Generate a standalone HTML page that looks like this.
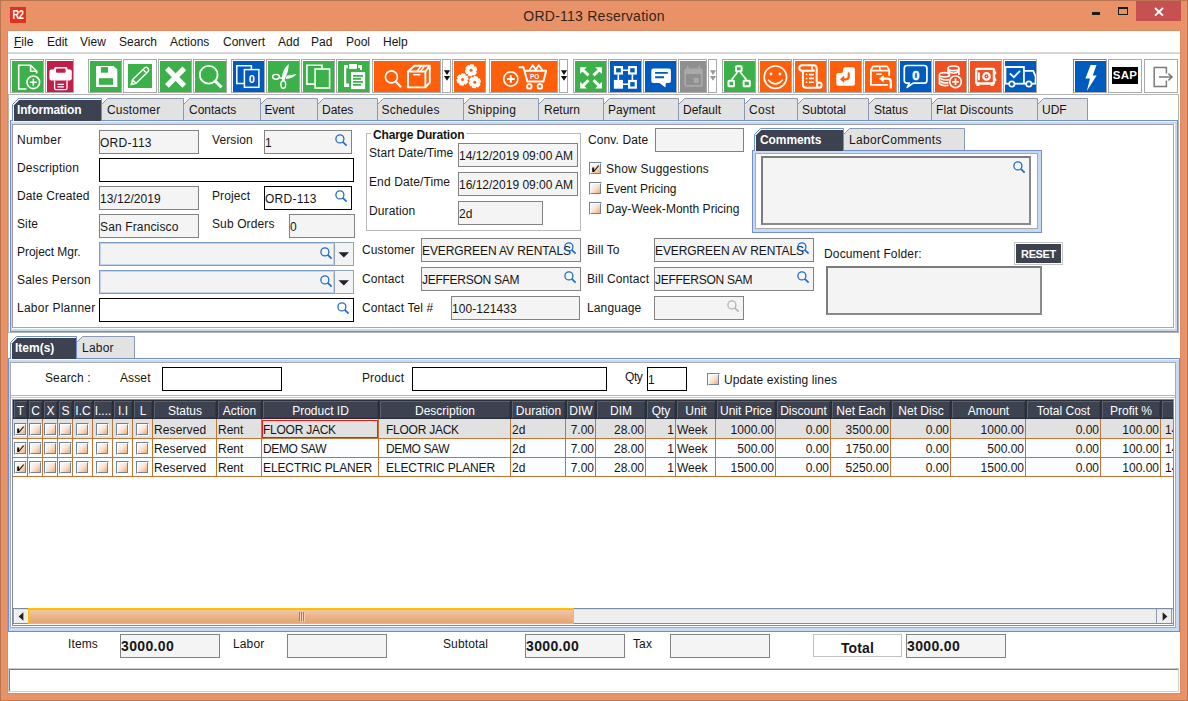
<!DOCTYPE html>
<html lang="en"><head><meta charset="utf-8"><title>ORD-113 Reservation</title>
<style>
*{box-sizing:border-box}
html,body{margin:0;padding:0}
body{width:1188px;height:701px;overflow:hidden;position:relative;background:#e99167;font-family:"Liberation Sans",sans-serif;font-size:12px;color:#161616;line-height:14px}
#win{position:absolute;left:0;top:0;width:1188px;height:701px;border:1px solid #b9754f;border-bottom-color:#c27a52}
#content{position:absolute;left:8px;top:31px;width:1172px;height:662px;background:#fff;box-shadow:0 0 0 1px #dd8b63}
.a{position:absolute}
.t{position:absolute;white-space:nowrap;line-height:14px;height:14px}
.b{font-weight:bold}
.w{color:#fff}
.f{position:absolute;background:#f4f4f4;border:1px solid #828282;height:24px;white-space:nowrap;overflow:hidden;line-height:14px;padding:5px 0 0 0}
.fb{position:absolute;background:#fff;border:1px solid #000;height:24px;white-space:nowrap;overflow:hidden;line-height:14px;padding:5px 0 0 0}
.btn{position:absolute;top:59px;height:34px;border:1px solid #aaa;background:#fff;padding:1px 0 0 1px}
.btn svg{display:block}
.dd{position:absolute;top:59px;height:34px;width:9px;border:1px solid #aaa;background:#fff}
.tab{position:absolute;top:98px;height:23px}
.tab span{position:absolute;top:5px;left:6px;white-space:nowrap}
.cb{position:absolute;width:13px;height:13px;border-top:1px solid #6f8297;border-left:1px solid #6f8297;border-right:1px solid #fff;border-bottom:1px solid #fff}
.cb i{display:block;width:11px;height:11px;border-top:1px solid #fff;border-left:1px solid #fff;border-right:1px solid #6f8297;border-bottom:1px solid #6f8297;background:linear-gradient(135deg,#f6f6f6 15%,#f9e3d3 50%,#f7aa69 100%)}
.cb svg{position:absolute;left:0;top:0}
.th{position:absolute;top:0;height:19px;background:#3d4250;border:1px solid #2b2f3a;box-shadow:inset 1px 1px 0 #5b6070,inset -1px -1px 0 #333743;color:#fff;text-align:center;line-height:14px;padding-top:3px;white-space:nowrap;overflow:hidden}
.td{position:absolute;height:19px;border-right:1px solid #c27636;border-bottom:1px solid #c27636;line-height:14px;padding:3px 1px 0 1px;white-space:nowrap;overflow:hidden}
.r{text-align:right}
</style></head>
<body>
<div id="win"></div>
<div id="content"></div>
<div class="a" style="left:10px;top:7px;width:16px;height:16px;background:#e0301e"></div><div class="t b w" style="left:10px;top:8px;width:16px;text-align:center;font-size:12px;letter-spacing:-.6px;transform:scaleX(.78);transform-origin:8px 0">R2</div>
<div class="t" id="title" style="left:394px;width:400px;text-align:center;top:7px;font-size:14px;letter-spacing:.25px;line-height:18px;height:18px;color:#33261f">ORD-113 Reservation</div>
<div class="a" style="left:1092px;top:12px;width:8px;height:3px;background:#1c1c1c"></div><div class="a" style="left:1118px;top:7px;width:10px;height:8px;border:1px solid #1c1c1c;border-top-width:2px"></div><div class="a" style="left:1136px;top:1px;width:45px;height:20px;background:#c75050"></div><svg class="a" style="left:1154px;top:7px" width="10" height="9" viewBox="0 0 10 9"><path d="M1 1L9 8.6M9 1L1 8.6" stroke="#fff" stroke-width="1.9" fill="none"/></svg>
<div class="t" style="left:14px;top:35px"><span style="text-decoration:underline">F</span>ile</div><div class="t" style="left:47px;top:35px">Edit</div><div class="t" style="left:80px;top:35px">View</div><div class="t" style="left:119px;top:35px">Search</div><div class="t" style="left:170px;top:35px">Actions</div><div class="t" style="left:223px;top:35px">Convert</div><div class="t" style="left:278px;top:35px">Add</div><div class="t" style="left:311px;top:35px">Pad</div><div class="t" style="left:346px;top:35px">Pool</div><div class="t" style="left:383px;top:35px">Help</div>
<div class="a" style="left:8px;top:52px;width:1172px;height:2px;background:#dcdcdc;border-bottom:1px solid #cfcfcf"></div>
<div class="btn" style="left:10px;width:34px"><svg width="31" height="31" viewBox="0 0 31 31"><rect width="31" height="31" fill="#3cb14a"/><path d="M14.5 28H6.7V4.2H18.6L24.7 10.3V12.6" stroke="#fff" fill="none" stroke-width="1.6"/><path d="M18.6 4.2V10.3H24.7" stroke="#fff" fill="none" stroke-width="1.6"/><circle cx="21.3" cy="21.3" r="6.3" stroke="#fff" fill="none" stroke-width="1.6"/><path d="M21.3 17.8V24.8M17.8 21.3H24.8" stroke="#fff" fill="none" stroke-width="1.6"/></svg></div>
<div class="btn" style="left:45px;width:29px"><svg width="26" height="31" viewBox="0 0 26 31"><rect width="26" height="31" fill="#c21e4a"/><path d="M8 6.1H19.6L21 8.6H23Q24.8 8.6 24.8 10.4V17.6Q24.8 19.4 23 19.4H4.2Q2.4 19.4 2.4 17.6V10.4Q2.4 8.6 4.2 8.6H6.6Z" fill="#fff"/><rect x="9" y="7.6" width="9.6" height="4.1" rx="1.2" fill="#c21e4a"/><path d="M7.6 19.4V27.2Q7.6 28.6 9 28.6H18.6Q20 28.6 20 27.2V19.4" stroke="#fff" fill="none" stroke-width="1.3"/><path d="M10.5 23.3H17M10.5 25.9H17" stroke="#fff" fill="none" stroke-width="1.2"/></svg></div>
<div class="btn" style="left:88px;width:34px"><svg width="31" height="31" viewBox="0 0 31 31"><rect width="31" height="31" fill="#3cb14a"/><path d="M6.1 4.9H23.6L27.3 8.6V26H6.1Z" fill="#fff"/><rect x="10.9" y="6.1" width="7.1" height="5.6" fill="#3cb14a"/><rect x="8.9" y="17.2" width="14.1" height="6.6" fill="#3cb14a"/></svg></div>
<div class="btn" style="left:158px;width:34px"><svg width="31" height="31" viewBox="0 0 31 31"><rect width="31" height="31" fill="#3cb14a"/><path d="M6.9 7.4L24.3 24.8M24.3 7.4L6.9 24.8" stroke="#fff" stroke-width="5.3" fill="none"/></svg></div>
<div class="btn" style="left:193px;width:34px"><svg width="31" height="31" viewBox="0 0 31 31"><rect width="31" height="31" fill="#3cb14a"/><circle cx="13.7" cy="13.7" r="8.9" stroke="#fff" fill="none" stroke-width="1.8"/><path d="M20 20L26.6 26.4" stroke="#fff" fill="none" stroke-width="3"/></svg></div>
<div class="btn" style="left:231px;width:34px"><svg width="31" height="31" viewBox="0 0 31 31"><rect width="31" height="31" fill="#005bbf"/><path d="M11.4 22.5H3.8V4.8H18.4V8.6" stroke="#fff" fill="none" stroke-width="1.5"/><rect x="11.4" y="8.6" width="14.5" height="17.7" stroke="#fff" fill="none" stroke-width="1.5"/><text x="18.7" y="21.6" font-family="Liberation Sans,sans-serif" font-weight="bold" font-size="11" fill="#fff" text-anchor="middle">0</text></svg></div>
<div class="btn" style="left:266px;width:34px"><svg width="31" height="31" viewBox="0 0 31 31"><rect width="31" height="31" fill="#3cb14a"/><ellipse cx="8" cy="15.8" rx="3.4" ry="2.4" stroke="#fff" fill="none" stroke-width="1.4"/><ellipse cx="15.3" cy="23.5" rx="2.4" ry="3.8" stroke="#fff" fill="none" stroke-width="1.4"/><path d="M13.8 17.6Q14.4 8 20.7 3Q20.8 10 17.4 16.4L16.4 19.8H14.2Z" fill="#fff"/><path d="M18.6 14.8L28.6 12.9Q25.2 17.2 17.8 17.9Z" fill="#fff"/><path d="M11.2 16.4L15.6 18.2" stroke="#fff" fill="none" stroke-width="1.4"/></svg></div>
<div class="btn" style="left:301px;width:34px"><svg width="31" height="31" viewBox="0 0 31 31"><rect width="31" height="31" fill="#3cb14a"/><path d="M12.1 23.1H3.9V4.2H19V8" stroke="#fff" fill="none" stroke-width="1.6"/><rect x="12.1" y="8" width="14.5" height="19" stroke="#fff" fill="none" stroke-width="1.6"/></svg></div>
<div class="btn" style="left:336px;width:34px"><svg width="31" height="31" viewBox="0 0 31 31"><rect width="31" height="31" fill="#3cb14a"/><path d="M6 4H10V7.2H8.2V22.6H11.1V26H6Z" fill="#fff"/><rect x="11.1" y="3" width="7.8" height="4.9" fill="#fff"/><path d="M20.2 4H24V8.9H22V7H20.2Z" fill="#fff"/><rect x="13" y="11.1" width="14.1" height="17" fill="#fff"/><path d="M15 14.9H25M15 17.9H23M15 20.9H25M15 23.9H23" stroke="#3cb14a" stroke-width="1.7"/></svg></div>
<div class="btn" style="left:372px;width:69px"><svg width="66" height="31" viewBox="0 0 66 31"><rect width="66" height="31" fill="#ff5f0a"/><circle cx="17.4" cy="15.9" r="6" stroke="#fff" fill="none" stroke-width="1.6"/><path d="M21.7 20.4L27.1 26.2" stroke="#fff" fill="none" stroke-width="2.2"/><path d="M34 10.5H51.4V26.4H34ZM34 10.5L40.4 4.8H55.8L51.4 10.5M55.8 4.8V21.5L51.4 26.4" stroke="#fff" fill="none" stroke-width="1.9" stroke-linejoin="round"/><path d="M47.4 4.8L43 10.5M50.6 4.8L46.4 10.5" stroke="#fff" fill="none" stroke-width="1.5"/><path d="M39.2 13.7H46.2" stroke="#fff" fill="none" stroke-width="1.5"/></svg></div>
<div class="btn" style="left:452px;width:34px"><svg width="31" height="31" viewBox="0 0 31 31"><rect width="31" height="31" fill="#ff5f0a"/><circle cx="17.10" cy="9.30" r="4.80" fill="#fff"/><rect x="14.80" y="3.30" width="4.6" height="12.00" rx="1" fill="#fff" transform="rotate(10 17.10 9.30)"/><rect x="14.80" y="3.30" width="4.6" height="12.00" rx="1" fill="#fff" transform="rotate(70 17.10 9.30)"/><rect x="14.80" y="3.30" width="4.6" height="12.00" rx="1" fill="#fff" transform="rotate(130 17.10 9.30)"/><circle cx="17.10" cy="9.30" r="1.5" fill="#ff5f0a"/><circle cx="8.50" cy="18.50" r="4.80" fill="#fff"/><rect x="6.20" y="12.50" width="4.6" height="12.00" rx="1" fill="#fff" transform="rotate(10 8.50 18.50)"/><rect x="6.20" y="12.50" width="4.6" height="12.00" rx="1" fill="#fff" transform="rotate(70 8.50 18.50)"/><rect x="6.20" y="12.50" width="4.6" height="12.00" rx="1" fill="#fff" transform="rotate(130 8.50 18.50)"/><circle cx="8.50" cy="18.50" r="1.5" fill="#ff5f0a"/><circle cx="20.80" cy="21.20" r="4.80" fill="#fff"/><rect x="18.50" y="15.20" width="4.6" height="12.00" rx="1" fill="#fff" transform="rotate(10 20.80 21.20)"/><rect x="18.50" y="15.20" width="4.6" height="12.00" rx="1" fill="#fff" transform="rotate(70 20.80 21.20)"/><rect x="18.50" y="15.20" width="4.6" height="12.00" rx="1" fill="#fff" transform="rotate(130 20.80 21.20)"/><circle cx="20.80" cy="21.20" r="1.5" fill="#ff5f0a"/></svg></div>
<div class="btn" style="left:489px;width:69px"><svg width="66" height="31" viewBox="0 0 66 31"><rect width="66" height="31" fill="#ff5f0a"/><circle cx="19.8" cy="18" r="7.1" stroke="#fff" fill="none" stroke-width="1.7"/><path d="M19.8 14.2V21.8M16 18H23.6" stroke="#fff" fill="none" stroke-width="2"/><path d="M28.4 6.3H32.4L36.4 20.6H52.4L55.2 9.8H34" stroke="#fff" fill="none" stroke-width="2" stroke-linejoin="round" stroke-linecap="round"/><circle cx="38.3" cy="25.4" r="2.3" stroke="#fff" fill="none" stroke-width="1.8"/><circle cx="48.9" cy="25.4" r="2.3" stroke="#fff" fill="none" stroke-width="1.8"/><path d="M38.4 9L41.8 4.2L44.8 8.4L47.7 4.2L51.4 9" stroke="#fff" fill="none" stroke-width="1.8" stroke-linejoin="round"/><text x="43.6" y="18" font-family="Liberation Sans,sans-serif" font-weight="bold" font-size="6.4" fill="#fff" text-anchor="middle">PO</text></svg></div>
<div class="btn" style="left:573px;width:34px"><svg width="31" height="31" viewBox="0 0 31 31"><rect width="31" height="31" fill="#3cb14a"/><path d="M5.1 6.2L11.8 6.2L5.1 12.9Z" fill="#fff"/><path d="M7.1 8.2L13.5 14.4" stroke="#fff" stroke-width="2.9"/><path d="M26.9 6.2L20.2 6.2L26.9 12.9Z" fill="#fff"/><path d="M24.9 8.2L18.5 14.4" stroke="#fff" stroke-width="2.9"/><path d="M5.1 27.4L11.8 27.4L5.1 20.7Z" fill="#fff"/><path d="M7.1 25.4L13.5 19.2" stroke="#fff" stroke-width="2.9"/><path d="M26.9 27.4L20.2 27.4L26.9 20.7Z" fill="#fff"/><path d="M24.9 25.4L18.5 19.2" stroke="#fff" stroke-width="2.9"/></svg></div>
<div class="btn" style="left:608px;width:34px"><svg width="31" height="31" viewBox="0 0 31 31"><rect width="31" height="31" fill="#005bbf"/><rect x="5" y="6.1" width="6.9" height="6.4" stroke="#fff" fill="none" stroke-width="2.2"/><rect x="19.1" y="6.1" width="6.7" height="6.4" stroke="#fff" fill="none" stroke-width="2.2"/><rect x="3.9" y="18.9" width="9.1" height="8.8" fill="#fff"/><rect x="19.1" y="20" width="6.7" height="6.6" stroke="#fff" fill="none" stroke-width="2.2"/><path d="M13 9.2H18M8.3 13.6V18.9M22.4 13.6V18.9M13 23.3H18" stroke="#fff" fill="none" stroke-width="1.6"/></svg></div>
<div class="btn" style="left:643px;width:34px"><svg width="31" height="31" viewBox="0 0 31 31"><rect width="31" height="31" fill="#005bbf"/><path d="M8.3 7.4H23.9Q25.9 7.4 25.9 9.4V19.9Q25.9 21.9 23.9 21.9H20.9L20.4 26.4L14.5 21.9H8.3Q6.3 21.9 6.3 19.9V9.4Q6.3 7.4 8.3 7.4Z" fill="#fff"/><path d="M10.1 11.9H22.8M10.1 16.3H19" stroke="#005bbf" stroke-width="1.9"/></svg></div>
<div class="btn" style="left:678px;width:29px"><svg width="26" height="31" viewBox="0 0 26 31"><rect width="26" height="31" fill="#8f8f8f"/><rect x="4.3" y="7.4" width="18.3" height="18.3" rx="1.6" fill="#a9a9a9"/><rect x="7" y="5" width="1.6" height="3" fill="#a9a9a9"/><rect x="18.4" y="5" width="1.6" height="3" fill="#a9a9a9"/><rect x="6" y="13" width="14.9" height="11" fill="#8f8f8f"/><rect x="13.7" y="16.8" width="5" height="5" fill="#a9a9a9"/></svg></div>
<div class="btn" style="left:722px;width:34px"><svg width="31" height="31" viewBox="0 0 31 31"><rect width="31" height="31" fill="#3cb14a"/><rect x="12" y="5.2" width="5.6" height="5" rx=".6" stroke="#fff" fill="none" stroke-width="2"/><rect x="4.5" y="19.7" width="5.5" height="5.6" rx=".6" stroke="#fff" fill="none" stroke-width="2"/><rect x="19.6" y="19.7" width="6.2" height="5.6" rx=".6" stroke="#fff" fill="none" stroke-width="2"/><path d="M13.4 11.2L7.6 18.7M16.4 11.2L22.4 18.7" stroke="#fff" fill="none" stroke-width="1.7"/></svg></div>
<div class="btn" style="left:758px;width:34px"><svg width="31" height="31" viewBox="0 0 31 31"><rect width="31" height="31" fill="#ff5f0a"/><circle cx="15.4" cy="16.2" r="11.2" stroke="#fff" fill="none" stroke-width="1.6"/><circle cx="11" cy="13" r="1.4" fill="#fff"/><circle cx="19.9" cy="13" r="1.4" fill="#fff"/><path d="M8.6 19.2Q15.4 26.6 22.2 19.2" stroke="#fff" fill="none" stroke-width="1.6" stroke-linecap="round"/></svg></div>
<div class="btn" style="left:793px;width:34px"><svg width="31" height="31" viewBox="0 0 31 31"><rect width="31" height="31" fill="#ff5f0a"/><path d="M19.6 9.7H7.4Q4.3 9.7 4.3 7Q4.3 4.3 7.4 4.3H18.6Q21.7 4.3 21.7 7.6V21.4" stroke="#fff" fill="none" stroke-width="2"/><path d="M18.6 4.3Q16.6 5 16.8 7Q17 9.2 19.4 9.7" stroke="#fff" fill="none" stroke-width="1.6"/><path d="M7.9 9.7V23.4Q7.9 26.7 11.2 26.7H24.4Q26.7 26.7 26.7 24Q26.7 21.4 24.2 21.4Q21.9 21.5 21.9 24Q22 26.4 24.4 26.7" stroke="#fff" fill="none" stroke-width="2" stroke-linejoin="round"/><path d="M13.9 13.6H18.9M13.9 17.4H18.9M13.9 21.2H18.9" stroke="#fff" fill="none" stroke-width="1.6"/><path d="M10.8 13.6H12.3M10.8 17.4H12.3M10.8 21.2H12.3" stroke="#fff" fill="none" stroke-width="1.5"/></svg></div>
<div class="btn" style="left:828px;width:34px"><svg width="31" height="31" viewBox="0 0 31 31"><rect width="31" height="31" fill="#ff5f0a"/><path d="M15.1 6.2H22.9Q24.9 6.2 24.9 8.2V22.8Q24.9 24.8 22.9 24.8H8.3Q6.3 24.8 6.3 22.8V14.1Q6.3 12.1 8.3 12.1H10.6Q13.1 12.1 13.1 9.6V8.2Q13.1 6.2 15.1 6.2Z" fill="#fff"/><path d="M18.7 12.4V15.6Q18.7 18.3 16 18.3H12.4" stroke="#ff5f0a" stroke-width="2.2" fill="none" stroke-linecap="round"/><path d="M10 18.3L14.2 14.6V22Z" fill="#ff5f0a"/></svg></div>
<div class="btn" style="left:863px;width:34px"><svg width="31" height="31" viewBox="0 0 31 31"><rect width="31" height="31" fill="#ff5f0a"/><path d="M23 23.9H5.9V8.9L8 5.4H22.1L24.2 8.9V15" stroke="#fff" fill="none" stroke-width="1.8" stroke-linejoin="round"/><path d="M5.9 9.6H24.2M14.8 5.4V9.6" stroke="#fff" fill="none" stroke-width="1.6"/><path d="M11.2 13.2H16.8" stroke="#fff" fill="none" stroke-width="1.5"/><path d="M17.6 17.7H22.6Q25.8 17.7 25.8 20.9V27.4" stroke="#fff" fill="none" stroke-width="2.3"/><path d="M14 17.7L18.6 14.2V21.2Z" fill="#fff"/></svg></div>
<div class="btn" style="left:898px;width:34px"><svg width="31" height="31" viewBox="0 0 31 31"><rect width="31" height="31" fill="#005bbf"/><path d="M7 4.5H24.2Q26.9 4.5 26.9 7.2V19.4Q26.9 22.1 24.2 22.1H13.2L7.2 26.4L9.4 22.1H7Q4.3 22.1 4.3 19.4V7.2Q4.3 4.5 7 4.5Z" stroke="#fff" fill="none" stroke-width="1.7" stroke-linejoin="round"/><text x="15.9" y="18.5" font-family="Liberation Sans,sans-serif" font-weight="bold" font-size="13" fill="#fff" stroke="#fff" stroke-width=".5" text-anchor="middle">0</text></svg></div>
<div class="btn" style="left:933px;width:34px"><svg width="31" height="31" viewBox="0 0 31 31"><rect width="31" height="31" fill="#f05122"/><ellipse cx="18.5" cy="7.3" rx="5.4" ry="2.3" stroke="#fff" fill="none" stroke-width="1.6"/><path d="M13.1 7.3V12.8M23.9 7.3V14M13.1 10.2Q18.5 14.2 23.9 10.2" stroke="#fff" fill="none" stroke-width="1.6"/><ellipse cx="9.4" cy="13.8" rx="5" ry="2.2" stroke="#fff" fill="none" stroke-width="1.6"/><path d="M4.4 13.8V22.6Q7.6 25.6 13.6 24.2M4.4 16.6Q8.4 20 14 18.6M4.4 19.6Q7.8 22.8 13.4 21.6M14.4 13.8V15.6" stroke="#fff" fill="none" stroke-width="1.6"/><circle cx="20.5" cy="20.8" r="5.8" fill="#f05122" stroke="#fff" stroke-width="1.7"/><path d="M20.5 17.5V24.1M17.2 20.8H23.8" stroke="#fff" fill="none" stroke-width="1.8"/></svg></div>
<div class="btn" style="left:968px;width:34px"><svg width="31" height="31" viewBox="0 0 31 31"><rect width="31" height="31" fill="#f05122"/><rect x="6.2" y="7.9" width="17.8" height="14.6" rx="1" stroke="#fff" fill="none" stroke-width="2.4"/><path d="M6.4 23.4H9.6V25H6.4ZM20.6 23.4H23.8V25H20.6ZM25 10.6H26.2V13.2H25ZM25 17.4H26.2V20H25Z" fill="#fff"/><path d="M8.9 11.5V19.2" stroke="#fff" fill="none" stroke-width="2"/><circle cx="16.5" cy="15.4" r="3.2" stroke="#fff" fill="none" stroke-width="2.2"/><circle cx="16.5" cy="15.4" r=".7" fill="#fff"/></svg></div>
<div class="btn" style="left:1003px;width:34px"><svg width="31" height="31" viewBox="0 0 31 31"><rect width="31" height="31" fill="#005bbf"/><path d="M0 22.7H31" stroke="#fff" fill="none" stroke-width="1.8"/><path d="M.4 22V6H18.9V22M18.9 9.8H28.2L30.6 15.4V22" stroke="#fff" fill="none" stroke-width="1.8" stroke-linejoin="miter"/><path d="M4.8 12.4L8.9 16.2L15 9.8" stroke="#fff" fill="none" stroke-width="1.8"/><circle cx="6.8" cy="23" r="2.7" fill="#005bbf" stroke="#fff" stroke-width="1.7"/><circle cx="23.9" cy="23" r="2.7" fill="#005bbf" stroke="#fff" stroke-width="1.7"/></svg></div>
<div class="btn" style="left:1073px;width:34px;border-top-color:#828282;border-left-color:#828282"><svg width="31" height="31" viewBox="0 0 31 31"><rect width="31" height="31" fill="#005bbf"/><path d="M15.6 3.9H21.5L17.8 14.4H21.7L11.8 30L15 17.4H10.4Z" fill="#fff"/></svg></div>
<div class="btn" style="left:123px;width:34px;padding:4px 0 0 4px"><svg width="24" height="24" viewBox="0 0 24 24"><rect width="24" height="24" fill="#3cb14a"/><path d="M3.1 20.7L4.4 15.7L16.6 3.9A2.5 2.5 0 0 1 20.1 7.4L8.1 19.3ZM4.4 15.7L8.1 19.3M15 5.5L18.5 9" stroke="#fff" stroke-width="1.4" fill="none" stroke-linejoin="round"/><path d="M3.1 20.7L3.9 17.8L6 19.9Z" fill="#fff"/></svg></div>
<div class="btn" style="left:1108px;width:34px"></div><div class="a" style="left:1112px;top:67px;width:26px;height:17px;background:#000"></div><div class="t b w" style="left:1112px;top:68px;width:26px;text-align:center;font-size:11.5px;letter-spacing:.3px">SAP</div>
<div class="btn" style="left:1144px;width:34px"><svg width="31" height="31" viewBox="0 0 31 31"><path d="M20.4 12.4V6.4H8.2V25.4H20.4V19.6" stroke="#7a7a7a" stroke-width="1.5" fill="none"/><path d="M13 16H26M22.4 12.6L26 16L22.4 19.4" stroke="#7a7a7a" stroke-width="1.5" fill="none"/></svg></div>
<div class="dd" style="left:442px"><svg width="7" height="32" viewBox="0 0 7 32" style="display:block;overflow:visible"><path d="M.9 10.3H7.1L4 15ZM.9 16.1H7.1L4 20.8Z" fill="#111"/></svg></div><div class="dd" style="left:559px"><svg width="7" height="32" viewBox="0 0 7 32" style="display:block;overflow:visible"><path d="M.9 10.3H7.1L4 15ZM.9 16.1H7.1L4 20.8Z" fill="#111"/></svg></div><div class="dd" style="left:708px"><svg width="7" height="32" viewBox="0 0 7 32" style="display:block;overflow:visible"><path d="M.9 10.3H7.1L4 15ZM.9 16.1H7.1L4 20.8Z" fill="#999"/></svg></div>
<div class="a" style="left:8px;top:94px;width:1171px;height:239px;border:1px solid #b5b5b5"></div>
<svg class="a" style="left:101px;top:98px" width="83" height="22" viewBox="0 0 83 22"><path d="M.5 22.5V6.5L6.5 .5H82.5V22.5" fill="#e2e2e2" stroke="#8a99b3"/></svg><div class="t" style="left:107.0px;top:103px;letter-spacing:0.17px">Customer</div><svg class="a" style="left:183px;top:98px" width="78" height="22" viewBox="0 0 78 22"><path d="M.5 22.5V6.5L6.5 .5H77.5V22.5" fill="#e2e2e2" stroke="#8a99b3"/></svg><div class="t" style="left:189.0px;top:103px">Contacts</div><svg class="a" style="left:260px;top:98px" width="58" height="22" viewBox="0 0 58 22"><path d="M.5 22.5V6.5L6.5 .5H57.5V22.5" fill="#e2e2e2" stroke="#8a99b3"/></svg><div class="t" style="left:264.5px;top:103px;letter-spacing:-0.16px">Event</div><svg class="a" style="left:317px;top:98px" width="61" height="22" viewBox="0 0 61 22"><path d="M.5 22.5V6.5L6.5 .5H60.5V22.5" fill="#e2e2e2" stroke="#8a99b3"/></svg><div class="t" style="left:322.0px;top:103px">Dates</div><svg class="a" style="left:377px;top:98px" width="87" height="22" viewBox="0 0 87 22"><path d="M.5 22.5V6.5L6.5 .5H86.5V22.5" fill="#e2e2e2" stroke="#8a99b3"/></svg><div class="t" style="left:381.5px;top:103px;letter-spacing:0.23px">Schedules</div><svg class="a" style="left:463px;top:98px" width="76" height="22" viewBox="0 0 76 22"><path d="M.5 22.5V6.5L6.5 .5H75.5V22.5" fill="#e2e2e2" stroke="#8a99b3"/></svg><div class="t" style="left:467.5px;top:103px;letter-spacing:0.25px">Shipping</div><svg class="a" style="left:538px;top:98px" width="66" height="22" viewBox="0 0 66 22"><path d="M.5 22.5V6.5L6.5 .5H65.5V22.5" fill="#e2e2e2" stroke="#8a99b3"/></svg><div class="t" style="left:544.0px;top:103px">Return</div><svg class="a" style="left:603px;top:98px" width="76" height="22" viewBox="0 0 76 22"><path d="M.5 22.5V6.5L6.5 .5H75.5V22.5" fill="#e2e2e2" stroke="#8a99b3"/></svg><div class="t" style="left:608.0px;top:103px">Payment</div><svg class="a" style="left:678px;top:98px" width="67" height="22" viewBox="0 0 67 22"><path d="M.5 22.5V6.5L6.5 .5H66.5V22.5" fill="#e2e2e2" stroke="#8a99b3"/></svg><div class="t" style="left:683.0px;top:103px">Default</div><svg class="a" style="left:744px;top:98px" width="54" height="22" viewBox="0 0 54 22"><path d="M.5 22.5V6.5L6.5 .5H53.5V22.5" fill="#e2e2e2" stroke="#8a99b3"/></svg><div class="t" style="left:749.0px;top:103px;letter-spacing:0.28px">Cost</div><svg class="a" style="left:797px;top:98px" width="72" height="22" viewBox="0 0 72 22"><path d="M.5 22.5V6.5L6.5 .5H71.5V22.5" fill="#e2e2e2" stroke="#8a99b3"/></svg><div class="t" style="left:802.0px;top:103px">Subtotal</div><svg class="a" style="left:868px;top:98px" width="64" height="22" viewBox="0 0 64 22"><path d="M.5 22.5V6.5L6.5 .5H63.5V22.5" fill="#e2e2e2" stroke="#8a99b3"/></svg><div class="t" style="left:874.0px;top:103px">Status</div><svg class="a" style="left:931px;top:98px" width="107" height="22" viewBox="0 0 107 22"><path d="M.5 22.5V6.5L6.5 .5H106.5V22.5" fill="#e2e2e2" stroke="#8a99b3"/></svg><div class="t" style="left:936.0px;top:103px;letter-spacing:0.10px">Flat Discounts</div><svg class="a" style="left:1037px;top:98px" width="51" height="22" viewBox="0 0 51 22"><path d="M.5 22.5V6.5L6.5 .5H50.5V22.5" fill="#e2e2e2" stroke="#8a99b3"/></svg><div class="t" style="left:1042.0px;top:103px">UDF</div>
<div class="a" style="left:10px;top:120px;width:1168px;height:212px;background:#c6dbf3;border:1px solid #6f8fd0;border-right-color:#7b8ca3;border-bottom-color:#7b8ca3"></div><div class="a" style="left:12px;top:124px;width:1162px;height:204px;background:#fff;border:1px solid #a9a9a9;border-left-color:#9c9c9c;border-top-color:#9c9c9c"></div><div class="a" style="left:12px;top:328px;width:1163px;height:1px;background:#fff"></div><div class="a" style="left:1174px;top:124px;width:1px;height:205px;background:#fff"></div>
<div class="a" style="left:11px;top:121px;width:1166px;height:1px;background:#eef5fd"></div><svg class="a" style="left:12px;top:98px" width="90" height="23" viewBox="0 0 90 23"><path d="M.5 23.5V6.5L6.5 .5H89.5V23.5" fill="#fff" stroke="#6f8fd0"/><path d="M2 23V7.2L7.2 2H89V23Z" fill="#3d4250"/></svg><div class="t b w" style="left:17.0px;top:103px;letter-spacing:-0.15px">Information</div>
<div class="t" style="left:17px;top:133px;letter-spacing:0.30px;">Number</div><div class="f" style="left:99px;top:130px;width:100px;letter-spacing:0.29px;">ORD-113</div><div class="t" style="left:212px;top:133px;letter-spacing:.12px;">Version</div><div class="f" style="left:264px;top:130px;width:88px;">1</div><svg class="a" style="left:335px;top:134px" width="13" height="13" viewBox="0 0 13 13"><circle cx="4.9" cy="4.9" r="4" stroke="#1e6fc6" stroke-width="1.3" fill="none"/><path d="M7.8 7.8L11.6 11.6" stroke="#1e6fc6" stroke-width="1.7"/></svg><div class="t" style="left:17px;top:161px;letter-spacing:0.18px;">Description</div><div class="fb" style="left:99px;top:158px;width:255px;"></div><div class="t" style="left:17px;top:189px;letter-spacing:0.09px;">Date Created</div><div class="f" style="left:99px;top:186px;width:100px;letter-spacing:0.07px;">13/12/2019</div><div class="t" style="left:212px;top:189px;letter-spacing:.12px;">Project</div><div class="fb" style="left:264px;top:186px;width:88px;letter-spacing:0.29px;">ORD-113</div><svg class="a" style="left:335px;top:190px" width="13" height="13" viewBox="0 0 13 13"><circle cx="4.9" cy="4.9" r="4" stroke="#1e6fc6" stroke-width="1.3" fill="none"/><path d="M7.8 7.8L11.6 11.6" stroke="#1e6fc6" stroke-width="1.7"/></svg><div class="t" style="left:17px;top:217px;letter-spacing:.12px;">Site</div><div class="f" style="left:99px;top:214px;width:100px;letter-spacing:0.14px;">San Francisco</div><div class="t" style="left:212px;top:217px;letter-spacing:.12px;">Sub Orders</div><div class="f" style="left:289px;top:214px;width:66px;">0</div>
<div class="t" style="left:17px;top:245px;letter-spacing:-0.04px;">Project Mgr.</div><div class="t" style="left:17px;top:273px;letter-spacing:0.22px;">Sales Person</div><div class="t" style="left:17px;top:301px;letter-spacing:0.24px;">Labor Planner</div><div class="a" style="left:99px;top:242px;width:236px;height:24px;background:#f3f3f3;border:1px solid #7d9cc4;box-shadow:inset 0 0 0 1px #c3d3e8"></div><div class="a" style="left:334px;top:242px;width:20px;height:24px;background:#f3f3f3;border:1px solid #8fa3bd"></div><svg class="a" style="left:338px;top:252px" width="12" height="6" viewBox="0 0 12 6"><path d="M.5 .3H11L5.8 5.4Z" fill="#222"/></svg><svg class="a" style="left:320px;top:247px" width="13" height="13" viewBox="0 0 13 13"><circle cx="4.9" cy="4.9" r="4" stroke="#1e6fc6" stroke-width="1.3" fill="none"/><path d="M7.8 7.8L11.6 11.6" stroke="#1e6fc6" stroke-width="1.7"/></svg><div class="a" style="left:99px;top:270px;width:236px;height:24px;background:#f3f3f3;border:1px solid #7d9cc4;box-shadow:inset 0 0 0 1px #c3d3e8"></div><div class="a" style="left:334px;top:270px;width:20px;height:24px;background:#f3f3f3;border:1px solid #8fa3bd"></div><svg class="a" style="left:338px;top:280px" width="12" height="6" viewBox="0 0 12 6"><path d="M.5 .3H11L5.8 5.4Z" fill="#222"/></svg><svg class="a" style="left:320px;top:275px" width="13" height="13" viewBox="0 0 13 13"><circle cx="4.9" cy="4.9" r="4" stroke="#1e6fc6" stroke-width="1.3" fill="none"/><path d="M7.8 7.8L11.6 11.6" stroke="#1e6fc6" stroke-width="1.7"/></svg><div class="fb" style="left:99px;top:298px;width:255px;"></div><svg class="a" style="left:337px;top:302px" width="13" height="13" viewBox="0 0 13 13"><circle cx="4.9" cy="4.9" r="4" stroke="#1e6fc6" stroke-width="1.3" fill="none"/><path d="M7.8 7.8L11.6 11.6" stroke="#1e6fc6" stroke-width="1.7"/></svg>
<div class="a" style="left:366px;top:133px;width:215px;height:98px;border:1px solid #b9b9b9"></div><div class="t b" style="left:371px;top:128px;background:#fff;padding:0 2px;letter-spacing:-.18px">Charge Duration</div><div class="t" style="left:369px;top:146px;letter-spacing:0.04px;">Start Date/Time</div><div class="f" style="left:458px;top:143px;width:120px;">14/12/2019 09:00 AM</div><div class="t" style="left:369px;top:175px;letter-spacing:.12px;">End Date/Time</div><div class="f" style="left:458px;top:172px;width:120px;">16/12/2019 09:00 AM</div><div class="t" style="left:369px;top:204px;letter-spacing:.12px;">Duration</div><div class="f" style="left:458px;top:201px;width:85px;">2d</div>
<div class="t" style="left:362px;top:243px;letter-spacing:.12px;">Customer</div><div class="f" style="left:421px;top:238px;width:160px;letter-spacing:-0.10px;">EVERGREEN AV RENTALS</div><svg class="a" style="left:564px;top:242px" width="13" height="13" viewBox="0 0 13 13"><circle cx="4.9" cy="4.9" r="4" stroke="#1e6fc6" stroke-width="1.3" fill="none"/><path d="M7.8 7.8L11.6 11.6" stroke="#1e6fc6" stroke-width="1.7"/></svg><div class="t" style="left:362px;top:272px;letter-spacing:.12px;">Contact</div><div class="f" style="left:421px;top:267px;width:160px;letter-spacing:-0.26px;">JEFFERSON SAM</div><svg class="a" style="left:564px;top:271px" width="13" height="13" viewBox="0 0 13 13"><circle cx="4.9" cy="4.9" r="4" stroke="#1e6fc6" stroke-width="1.3" fill="none"/><path d="M7.8 7.8L11.6 11.6" stroke="#1e6fc6" stroke-width="1.7"/></svg><div class="t" style="left:362px;top:301px;letter-spacing:.12px;">Contact Tel #</div><div class="f" style="left:451px;top:296px;width:129px;letter-spacing:0.07px;">100-121433</div>
<div class="t" style="left:588px;top:133px;letter-spacing:.12px;">Conv. Date</div><div class="f" style="left:655px;top:128px;width:89px;"></div><div class="cb" style="left:589px;top:162px"><i></i><svg width="12" height="12" viewBox="0 0 12 12"><path d="M2.2 4.6H4.2V7.2L8.2 2.2L9 3L4 9H2.2Z" fill="#111"/></svg></div><div class="t" style="left:606px;top:162px;letter-spacing:0.23px;">Show Suggestions</div><div class="cb" style="left:589px;top:182px"><i></i></div><div class="t" style="left:606px;top:182px;letter-spacing:-0.02px;">Event Pricing</div><div class="cb" style="left:589px;top:202px"><i></i></div><div class="t" style="left:606px;top:202px;letter-spacing:0.01px;">Day-Week-Month Pricing</div>
<div class="t" style="left:587px;top:243px;letter-spacing:.12px;">Bill To</div><div class="f" style="left:654px;top:238px;width:160px;letter-spacing:-0.10px;">EVERGREEN AV RENTALS</div><svg class="a" style="left:797px;top:242px" width="13" height="13" viewBox="0 0 13 13"><circle cx="4.9" cy="4.9" r="4" stroke="#1e6fc6" stroke-width="1.3" fill="none"/><path d="M7.8 7.8L11.6 11.6" stroke="#1e6fc6" stroke-width="1.7"/></svg><div class="t" style="left:587px;top:272px;letter-spacing:.12px;">Bill Contact</div><div class="f" style="left:654px;top:267px;width:160px;letter-spacing:-0.26px;">JEFFERSON SAM</div><svg class="a" style="left:797px;top:271px" width="13" height="13" viewBox="0 0 13 13"><circle cx="4.9" cy="4.9" r="4" stroke="#1e6fc6" stroke-width="1.3" fill="none"/><path d="M7.8 7.8L11.6 11.6" stroke="#1e6fc6" stroke-width="1.7"/></svg><div class="t" style="left:587px;top:301px;letter-spacing:.12px;">Language</div><div class="f" style="left:654px;top:296px;width:90px;"></div><svg class="a" style="left:727px;top:300px" width="13" height="13" viewBox="0 0 13 13"><circle cx="4.9" cy="4.9" r="4" stroke="#b5b5b5" stroke-width="1.3" fill="none"/><path d="M7.8 7.8L11.6 11.6" stroke="#b5b5b5" stroke-width="1.7"/></svg>
<svg class="a" style="left:843px;top:128px" width="122" height="22" viewBox="0 0 122 22"><path d="M.5 22.5V6.5L6.5 .5H121.5V22.5" fill="#e2e2e2" stroke="#8a99b3"/></svg><div class="t" style="left:849.0px;top:133px;letter-spacing:0.31px">LaborComments</div><div class="a" style="left:752px;top:150px;width:290px;height:83px;background:#c6dbf3;border:1px solid #6f8fd0"></div><div class="a" style="left:755px;top:153px;width:283px;height:76px;background:#fff;border:1px solid #a9a9a9"></div><div class="a" style="left:761px;top:156px;width:270px;height:69px;background:#f4f4f4;border:2px solid #7c7c7c;border-right-color:#8a8a8a;border-bottom-color:#8a8a8a"></div><svg class="a" style="left:1013px;top:161px" width="13" height="13" viewBox="0 0 13 13"><circle cx="4.9" cy="4.9" r="4" stroke="#1e6fc6" stroke-width="1.3" fill="none"/><path d="M7.8 7.8L11.6 11.6" stroke="#1e6fc6" stroke-width="1.7"/></svg><svg class="a" style="left:754px;top:128px" width="90" height="23" viewBox="0 0 90 23"><path d="M.5 23.5V6.5L6.5 .5H89.5V23.5" fill="#fff" stroke="#6f8fd0"/><path d="M2 23V7.2L7.2 2H89V23Z" fill="#3d4250"/></svg><div class="t b w" style="left:760.0px;top:133px;letter-spacing:-0.08px">Comments</div>
<div class="t" style="left:824px;top:247px;letter-spacing:0.15px;">Document Folder:</div><div class="a" style="left:1014px;top:242px;width:49px;height:23px;border:1px solid #c4c4c4;background:#fff"></div><div class="a" style="left:1016px;top:244px;width:45px;height:19px;background:#3d4250"></div><div class="t b w" style="left:1016px;top:247px;width:45px;text-align:center;font-size:11px;letter-spacing:-.35px">RESET</div><div class="a" style="left:826px;top:266px;width:216px;height:49px;background:#f4f4f4;border:2px solid #7c7c7c;border-right-color:#8a8a8a;border-bottom-color:#8a8a8a"></div>
<svg class="a" style="left:76px;top:336px" width="59" height="22" viewBox="0 0 59 22"><path d="M.5 22.5V6.5L6.5 .5H58.5V22.5" fill="#e2e2e2" stroke="#8a99b3"/></svg><div class="t" style="left:82.0px;top:341px;letter-spacing:0.22px">Labor</div><div class="a" style="left:8px;top:358px;width:1172px;height:274px;background:#c6dbf3;border:1px solid #6f8fd0;border-right-color:#7b8ca3;border-bottom-color:#7b8ca3"></div><div class="a" style="left:10px;top:362px;width:1166px;height:266px;background:#fff;border:1px solid #a9a9a9"></div><div class="a" style="left:9px;top:359px;width:1170px;height:1px;background:#eef5fd"></div><svg class="a" style="left:10px;top:336px" width="67" height="23" viewBox="0 0 67 23"><path d="M.5 23.5V6.5L6.5 .5H66.5V23.5" fill="#fff" stroke="#6f8fd0"/><path d="M2 23V7.2L7.2 2H66V23Z" fill="#3d4250"/></svg><div class="t b w" style="left:15.0px;top:341px">Item(s)</div>
<div class="t" style="left:45px;top:371px;letter-spacing:.12px;">Search :</div><div class="t" style="left:120px;top:371px;letter-spacing:.12px;">Asset</div><div class="fb" style="left:162px;top:367px;width:120px;"></div><div class="t" style="left:362px;top:371px;letter-spacing:.12px;">Product</div><div class="fb" style="left:412px;top:367px;width:195px;"></div><div class="t" style="left:625px;top:370px;letter-spacing:-0.42px;">Qty</div><div class="fb" style="left:647px;top:367px;width:40px;">1</div><div class="cb" style="left:707px;top:373px"><i></i></div><div class="t" style="left:724px;top:373px;letter-spacing:0.11px;">Update existing lines</div><div class="a" style="left:11px;top:395px;width:1164px;height:1px;background:#b9b9b9"></div><div class="a" style="left:11px;top:397px;width:1164px;height:1px;background:#c9c9c9"></div>
<div class="a" style="left:12px;top:399px;width:1162px;height:227px;border:1px solid #7b8ca3;background:#fff"></div><div class="a" id="tbl" style="left:13px;top:400px;width:1160px;height:208px;overflow:hidden"><div class="th" style="left:0px;width:15px">T</div><div class="th" style="left:15px;width:15px">C</div><div class="th" style="left:30px;width:15px">X</div><div class="th" style="left:45px;width:15px">S</div><div class="th" style="left:60px;width:20px">I.C</div><div class="th" style="left:80px;width:20px">I....</div><div class="th" style="left:100px;width:20px">I.I</div><div class="th" style="left:120px;width:20px">L</div><div class="th" style="left:140px;width:64px">Status</div><div class="th" style="left:204px;width:45px">Action</div><div class="th" style="left:249px;width:117px">Product ID</div><div class="th" style="left:366px;width:132px">Description</div><div class="th" style="left:498px;width:55px">Duration</div><div class="th" style="left:553px;width:30px">DIW</div><div class="th" style="left:583px;width:50px">DIM</div><div class="th" style="left:633px;width:30px">Qty</div><div class="th" style="left:663px;width:40px">Unit</div><div class="th" style="left:703px;width:60px">Unit Price</div><div class="th" style="left:763px;width:55px">Discount</div><div class="th" style="left:818px;width:60px">Net Each</div><div class="th" style="left:878px;width:60px">Net Disc</div><div class="th" style="left:938px;width:75px">Amount</div><div class="th" style="left:1013px;width:75px">Total Cost</div><div class="th" style="left:1088px;width:60px">Profit %</div><div class="th" style="left:1148px;width:39px"></div><div class="a" style="left:0;top:19px;width:1160px;height:20px;background:#e1e1e1"></div><div class="td" style="left:0px;top:19px;width:15px;height:20px;padding-top:4px;"></div><div class="td" style="left:15px;top:19px;width:15px;height:20px;padding-top:4px;"></div><div class="td" style="left:30px;top:19px;width:15px;height:20px;padding-top:4px;"></div><div class="td" style="left:45px;top:19px;width:15px;height:20px;padding-top:4px;"></div><div class="td" style="left:60px;top:19px;width:20px;height:20px;padding-top:4px;"></div><div class="td" style="left:80px;top:19px;width:20px;height:20px;padding-top:4px;"></div><div class="td" style="left:100px;top:19px;width:20px;height:20px;padding-top:4px;"></div><div class="td" style="left:120px;top:19px;width:20px;height:20px;padding-top:4px;"></div><div class="td" style="left:140px;top:19px;width:64px;letter-spacing:0.11px;height:20px;padding-top:4px;">Reserved</div><div class="td" style="left:204px;top:19px;width:45px;height:20px;padding-top:4px;">Rent</div><div class="td" style="left:249px;top:19px;width:117px;letter-spacing:-0.25px;height:20px;padding-top:4px;">FLOOR JACK</div><div class="td" style="left:366px;top:19px;width:132px;letter-spacing:-0.25px;padding-left:7px;height:20px;padding-top:4px;">FLOOR JACK</div><div class="td" style="left:498px;top:19px;width:55px;height:20px;padding-top:4px;">2d</div><div class="td r" style="left:553px;top:19px;width:30px;height:20px;padding-top:4px;">7.00</div><div class="td r" style="left:583px;top:19px;width:50px;height:20px;padding-top:4px;">28.00</div><div class="td r" style="left:633px;top:19px;width:30px;height:20px;padding-top:4px;">1</div><div class="td" style="left:663px;top:19px;width:40px;height:20px;padding-top:4px;">Week</div><div class="td r" style="left:703px;top:19px;width:60px;height:20px;padding-top:4px;">1000.00</div><div class="td r" style="left:763px;top:19px;width:55px;height:20px;padding-top:4px;">0.00</div><div class="td r" style="left:818px;top:19px;width:60px;height:20px;padding-top:4px;">3500.00</div><div class="td r" style="left:878px;top:19px;width:60px;height:20px;padding-top:4px;">0.00</div><div class="td r" style="left:938px;top:19px;width:75px;height:20px;padding-top:4px;">1000.00</div><div class="td r" style="left:1013px;top:19px;width:75px;height:20px;padding-top:4px;">0.00</div><div class="td r" style="left:1088px;top:19px;width:60px;height:20px;padding-top:4px;">100.00</div><div class="td" style="left:1148px;top:19px;width:39px;padding-left:4px;height:20px;padding-top:4px;">14</div><div class="cb" style="left:1px;top:23px"><i></i><svg width="12" height="12" viewBox="0 0 12 12"><path d="M2.2 4.6H4.2V7.2L8.2 2.2L9 3L4 9H2.2Z" fill="#111"/></svg></div><div class="cb" style="left:16px;top:23px"><i></i></div><div class="cb" style="left:31px;top:23px"><i></i></div><div class="cb" style="left:46px;top:23px"><i></i></div><div class="cb" style="left:63px;top:23px"><i></i></div><div class="cb" style="left:83px;top:23px"><i></i></div><div class="cb" style="left:103px;top:23px"><i></i></div><div class="cb" style="left:123px;top:23px"><i></i></div><div class="a" style="left:0;top:39px;width:1160px;height:19px;background:#fbfdff"></div><div class="td" style="left:0px;top:39px;width:15px;"></div><div class="td" style="left:15px;top:39px;width:15px;"></div><div class="td" style="left:30px;top:39px;width:15px;"></div><div class="td" style="left:45px;top:39px;width:15px;"></div><div class="td" style="left:60px;top:39px;width:20px;"></div><div class="td" style="left:80px;top:39px;width:20px;"></div><div class="td" style="left:100px;top:39px;width:20px;"></div><div class="td" style="left:120px;top:39px;width:20px;"></div><div class="td" style="left:140px;top:39px;width:64px;letter-spacing:0.11px;">Reserved</div><div class="td" style="left:204px;top:39px;width:45px;">Rent</div><div class="td" style="left:249px;top:39px;width:117px;letter-spacing:-0.38px;">DEMO SAW</div><div class="td" style="left:366px;top:39px;width:132px;letter-spacing:-0.38px;padding-left:7px;">DEMO SAW</div><div class="td" style="left:498px;top:39px;width:55px;">2d</div><div class="td r" style="left:553px;top:39px;width:30px;">7.00</div><div class="td r" style="left:583px;top:39px;width:50px;">28.00</div><div class="td r" style="left:633px;top:39px;width:30px;">1</div><div class="td" style="left:663px;top:39px;width:40px;">Week</div><div class="td r" style="left:703px;top:39px;width:60px;">500.00</div><div class="td r" style="left:763px;top:39px;width:55px;">0.00</div><div class="td r" style="left:818px;top:39px;width:60px;">1750.00</div><div class="td r" style="left:878px;top:39px;width:60px;">0.00</div><div class="td r" style="left:938px;top:39px;width:75px;">500.00</div><div class="td r" style="left:1013px;top:39px;width:75px;">0.00</div><div class="td r" style="left:1088px;top:39px;width:60px;">100.00</div><div class="td" style="left:1148px;top:39px;width:39px;padding-left:4px;">14</div><div class="cb" style="left:1px;top:42px"><i></i><svg width="12" height="12" viewBox="0 0 12 12"><path d="M2.2 4.6H4.2V7.2L8.2 2.2L9 3L4 9H2.2Z" fill="#111"/></svg></div><div class="cb" style="left:16px;top:42px"><i></i></div><div class="cb" style="left:31px;top:42px"><i></i></div><div class="cb" style="left:46px;top:42px"><i></i></div><div class="cb" style="left:63px;top:42px"><i></i></div><div class="cb" style="left:83px;top:42px"><i></i></div><div class="cb" style="left:103px;top:42px"><i></i></div><div class="cb" style="left:123px;top:42px"><i></i></div><div class="a" style="left:0;top:58px;width:1160px;height:19px;background:#fbfdff"></div><div class="td" style="left:0px;top:58px;width:15px;"></div><div class="td" style="left:15px;top:58px;width:15px;"></div><div class="td" style="left:30px;top:58px;width:15px;"></div><div class="td" style="left:45px;top:58px;width:15px;"></div><div class="td" style="left:60px;top:58px;width:20px;"></div><div class="td" style="left:80px;top:58px;width:20px;"></div><div class="td" style="left:100px;top:58px;width:20px;"></div><div class="td" style="left:120px;top:58px;width:20px;"></div><div class="td" style="left:140px;top:58px;width:64px;letter-spacing:0.11px;">Reserved</div><div class="td" style="left:204px;top:58px;width:45px;">Rent</div><div class="td" style="left:249px;top:58px;width:117px;letter-spacing:-0.11px;">ELECTRIC PLANER</div><div class="td" style="left:366px;top:58px;width:132px;letter-spacing:-0.11px;padding-left:7px;">ELECTRIC PLANER</div><div class="td" style="left:498px;top:58px;width:55px;">2d</div><div class="td r" style="left:553px;top:58px;width:30px;">7.00</div><div class="td r" style="left:583px;top:58px;width:50px;">28.00</div><div class="td r" style="left:633px;top:58px;width:30px;">1</div><div class="td" style="left:663px;top:58px;width:40px;">Week</div><div class="td r" style="left:703px;top:58px;width:60px;">1500.00</div><div class="td r" style="left:763px;top:58px;width:55px;">0.00</div><div class="td r" style="left:818px;top:58px;width:60px;">5250.00</div><div class="td r" style="left:878px;top:58px;width:60px;">0.00</div><div class="td r" style="left:938px;top:58px;width:75px;">1500.00</div><div class="td r" style="left:1013px;top:58px;width:75px;">0.00</div><div class="td r" style="left:1088px;top:58px;width:60px;">100.00</div><div class="td" style="left:1148px;top:58px;width:39px;padding-left:4px;">14</div><div class="cb" style="left:1px;top:61px"><i></i><svg width="12" height="12" viewBox="0 0 12 12"><path d="M2.2 4.6H4.2V7.2L8.2 2.2L9 3L4 9H2.2Z" fill="#111"/></svg></div><div class="cb" style="left:16px;top:61px"><i></i></div><div class="cb" style="left:31px;top:61px"><i></i></div><div class="cb" style="left:46px;top:61px"><i></i></div><div class="cb" style="left:63px;top:61px"><i></i></div><div class="cb" style="left:83px;top:61px"><i></i></div><div class="cb" style="left:103px;top:61px"><i></i></div><div class="cb" style="left:123px;top:61px"><i></i></div><div class="a" style="left:249px;top:20px;width:116px;height:18px;border:1px solid #e81c14"></div></div>
<div class="a" style="left:13px;top:608px;width:1160px;height:16px;background:#eee;border-top:1px solid #7b8ca3;border-bottom:1px solid #7b8ca3"></div><div class="a" style="left:13px;top:609px;width:1160px;height:1px;background:#cfe0f3"></div><div class="a" style="left:28px;top:608px;width:546px;height:16px;border:1px solid #ffc000;background:linear-gradient(180deg,#e59e68 0,#f1c5a4 1.5px,#ecb48c 50%,#e8a673 100%)"></div><svg class="a" style="left:298px;top:611px" width="8" height="12" viewBox="0 0 8 12"><path d="M2.5 2V11M4.5 2V11M6.5 2V11" stroke="#f3d3bd" stroke-width="1"/><path d="M1.5 1V10M3.5 1V10M5.5 1V10" stroke="#8c7f92" stroke-width="1"/></svg><svg class="a" style="left:18px;top:612px" width="6" height="9" viewBox="0 0 6 9"><path d="M5.4 .2V8.8L.6 4.5Z" fill="#222"/></svg><div class="a" style="left:1156px;top:609px;width:16px;height:14px;border-left:1px solid #8d9cb2;border-right:1px solid #8d9cb2"></div><div class="a" style="left:13px;top:609px;width:2px;height:14px;background:#fff;border-left:1px solid #8d9cb2"></div><svg class="a" style="left:1162px;top:612px" width="6" height="9" viewBox="0 0 6 9"><path d="M.6 .2V8.8L5.4 4.5Z" fill="#222"/></svg>
<div class="t" style="left:68px;top:637px;letter-spacing:.12px;">Items</div><div class="f b" style="left:120px;top:634px;width:100px;font-size:14px;line-height:16px;padding:3px 0 0 0;letter-spacing:.35px">3000.00</div><div class="t" style="left:233px;top:637px;letter-spacing:.12px;">Labor</div><div class="f b" style="left:287px;top:634px;width:100px;font-size:14px;line-height:16px;padding:3px 0 0 0;letter-spacing:.35px"></div><div class="t" style="left:443px;top:637px;letter-spacing:.12px;">Subtotal</div><div class="f b" style="left:525px;top:634px;width:100px;font-size:14px;line-height:16px;padding:3px 0 0 0;letter-spacing:.35px">3000.00</div><div class="t" style="left:633px;top:637px;letter-spacing:.12px;">Tax</div><div class="f b" style="left:670px;top:634px;width:100px;font-size:14px;line-height:16px;padding:3px 0 0 0;letter-spacing:.35px"></div><div class="a b" style="left:813px;top:634px;width:89px;height:23px;border:1px solid #c2c2c2;background:#fff;font-size:14px;line-height:16px;padding-top:5px;text-align:center;letter-spacing:.15px">Total</div><div class="f b" style="left:906px;top:634px;width:100px;font-size:14px;line-height:16px;padding:3px 0 0 0;letter-spacing:.35px">3000.00</div>
<div class="a" style="left:8px;top:668px;width:1171px;height:24px;border-top:1px solid #c9c9c9;border-left:1px solid #c9c9c9;border-bottom:1px solid #cdd1d1;border-right:1px solid #cdd1d1"><div style="width:100%;height:100%;border-top:1px solid #7c7c7c;border-left:1px solid #7c7c7c"></div></div>
</body></html>
